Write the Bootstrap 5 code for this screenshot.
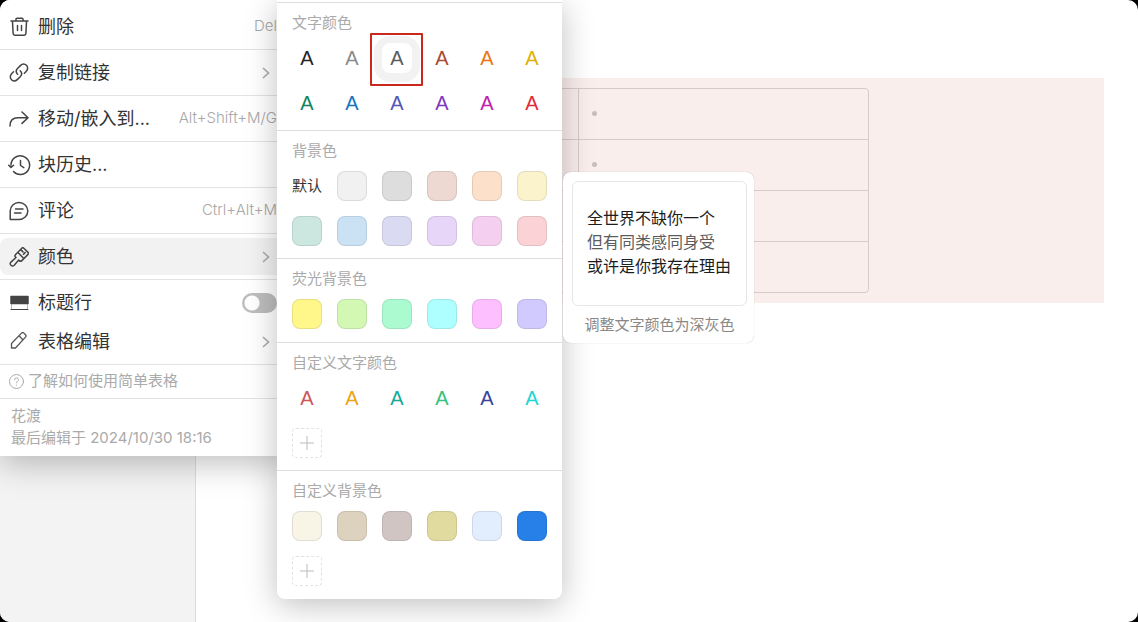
<!DOCTYPE html>
<html lang="zh-CN">
<head>
<meta charset="utf-8">
<meta name="viewport" content="width=device-width, initial-scale=1">
<title>简单表格</title>
<link rel="stylesheet" href="https://cdn.jsdelivr.net/npm/bootstrap@5.3.0/dist/css/bootstrap.min.css">
<style>
  body { background: #000; font-family: Inter, "Noto Sans CJK SC", sans-serif; color: #333; }
  .shell { background: #fff; border-radius: 10px; }
  .sidebar { flex: 0 0 196px; background: #f3f3f3; border-right: 1px solid #dcdcdc; }
  .page { padding: 78px 34px 0 81px; }
  .block { background: #faeeed; padding: 10px; }
  .grid-frame { max-width: 582px; border: 1px solid #d8cac9; border-radius: 4px; }
  .grid-frame table { width: 100%; table-layout: fixed; border-collapse: separate; border-spacing: 0; }
  .grid-frame td { height: 51px; padding: 0 13px 2px; border-bottom: 1px solid #d8cac9; }
  .grid-frame td + td { border-left: 1px solid #d8cac9; }
  .grid-frame tr:last-child td { height: 50px; border-bottom: 0; }
  .bullet { width: 5px; height: 5px; background: #cbbdbd; }

  .menu { top: 0; left: 0; width: 288px; padding-top: 3px; background: #fff; box-shadow: 0 8px 30px rgba(0,0,0,.25); }
  .group { border-top: 1px solid #e3e3e3; padding: 4px 0; }
  .group:first-child { border-top-color: transparent; }
  .pair { gap: 2px; }
  .item { height: 37px; padding: 0 11px 0 9px; gap: 9px; border: 0; border-radius: 8px; background: none; font-size: 18px; color: #333; text-align: left; }
  .item.chosen { background: #f2f2f2; }
  .item svg.glyph { width: 20px; height: 20px; flex: none; }
  .glyph { fill: none; stroke: #444; stroke-width: 1.5; stroke-linecap: round; stroke-linejoin: round; }
  .keys { font-size: 15px; font-weight: 300; color: #a8a8a8; }
  .chev { width: 8px; height: 14px; margin-right: 7px; fill: none; stroke: #aaa; stroke-width: 1.6; }
  .switch.form-check-input { width: 35px; height: 20px; margin: 0; border: 0; border-radius: 10px; background: radial-gradient(circle at 10px 10px, #fff 7px, #bdbdbd 8px); }
  .help { height: 33px; padding-left: 9px; gap: 4px; font-size: 15px; color: #aaa; }
  .meta { padding: 6px 11px 7px; font-size: 15px; line-height: 22px; color: #aaa; }

  .panel { top: 0; left: 277px; width: 285px; padding: 2px 0 1px; background: #fff; border-radius: 0 0 8px 8px; box-shadow: 0 6px 32px rgba(0,0,0,.25); }
  .sect { border-top: 1px solid #ddd; padding: 10px 15px 12px; }
  .sect-short { padding-bottom: 13px; }
  .sect h2 { font-size: 15px; line-height: 20px; font-weight: 400; color: #aaa; margin: 0 0 10px; }
  .swatches { display: grid; grid-template-columns: repeat(6, 30px); gap: 15px; }
  .sw { width: 30px; height: 30px; padding: 0; border: 1px solid rgba(0,0,0,.09); border-radius: 8px; }
  .ltr { border: 0; background: #fff; font-family: "Liberation Sans", sans-serif; font-size: 20px; line-height: 30px; }
  .plain { border: 0; background: none; font-size: 15px; line-height: 28px; color: #333; white-space: nowrap; }
  .add { border: 1px dashed #e2e2e2; border-radius: 4px; background: #fff; display: grid; place-items: center; }
  .picked { box-shadow: 0 1px 0 8px #f2f2f2; }
  .frame { left: -12px; top: -10px; width: 53px; height: 53px; border: 2px solid #c9281c; border-radius: 1px; }

  .tip { top: 172px; left: 563px; width: 191px; padding: 9px 7px 8px 9px; background: #fff; border-radius: 8px; box-shadow: 0 0 1px rgba(0,0,0,.3); }
  .sample { padding: 24px 0 27px 14px; border: 1px solid #e6e6e6; border-radius: 6px; font-size: 16px; line-height: 24px; color: #1d1d1d; white-space: nowrap; }
  .tip-note { margin-top: 9px; font-size: 15px; line-height: 20px; color: #888; white-space: nowrap; }
</style>
</head>
<body>
<div class="shell position-relative d-flex min-vh-100 overflow-hidden">
  <aside class="sidebar"></aside>
  <main class="page flex-grow-1">
    <div class="block">
      <div class="grid-frame">
        <table>
          <tr><td></td><td><span class="bullet rounded-circle d-block"></span></td></tr>
          <tr><td></td><td><span class="bullet rounded-circle d-block"></span></td></tr>
          <tr><td></td><td></td></tr>
          <tr><td></td><td></td></tr>
        </table>
      </div>
    </div>
  </main>

  <nav class="menu position-absolute">
    <div class="group">
      <button class="item d-flex align-items-center w-100"><svg class="glyph" viewBox="0 0 20 20"><path d="M2 4h17M7 3.700V2.100Q7 1.200 8 1.200h5q1 0 1 .9v1.600M3.500 4.300l.6 12.200q.1 1.700 1.800 1.700h9.200q1.700 0 1.800-1.700l.6-12.200M8.500 8.500v5M12.500 8.500v5"/></svg><span>删除</span><span class="keys ms-auto">Del</span></button>
    </div>
    <div class="group">
      <button class="item d-flex align-items-center w-100"><svg class="glyph" viewBox="0 0 20 20"><path d="M8.600 11.300C6.900 9.500 7 7 8.700 5.300l2.700-2.700c1.800-1.800 4.300-1.900 6-.3 1.700 1.700 1.600 4.300-.1 6l-1.900 1.900M11.200 7.700c1.800 1.800 1.700 4.300 0 6l-2.700 2.700c-1.800 1.800-4.300 1.900-6 .3-1.700-1.700-1.600-4.300.1-6l1.900-1.900"/></svg><span>复制链接</span><svg class="chev ms-auto" viewBox="0 0 8 14"><path d="M1 2l5.500 5L1 12"/></svg></button>
    </div>
    <div class="group">
      <button class="item d-flex align-items-center w-100"><svg class="glyph" viewBox="0 0 20 20"><path d="M1 17C1 11 4 8.700 9 8.700h9.500M13 3l6 5.700-6 5.700"/></svg><span>移动/嵌入到...</span><span class="keys ms-auto">Alt+Shift+M/G</span></button>
    </div>
    <div class="group">
      <button class="item d-flex align-items-center w-100"><svg class="glyph overflow-visible" viewBox="0 0 20 20"><path d="M2 10A9.300 9.300 0 1 1 4.500 16.500M-.3 10.200l2.300 2.200 2.600-2.200M11.500 5.500v5l3.300 2.200"/></svg><span>块历史...</span></button>
    </div>
    <div class="group">
      <button class="item d-flex align-items-center w-100"><svg class="glyph" viewBox="0 0 20 20"><path d="M1.200 18.500V10a8.800 8.500 0 1 1 8.800 8.500zM6.500 8h7.500M5.500 12h6.500"/></svg><span>评论</span><span class="keys ms-auto">Ctrl+Alt+M</span></button>
    </div>
    <div class="group">
      <button class="item chosen d-flex align-items-center w-100"><svg class="glyph" viewBox="0 0 20 20"><path d="M12.800 1.200Q13.800.2 14.800 1.200l4.200 4.200q1 1 0 2l-6.200 6.200q-1.300 1.300-2.600 0l-.5-.5-4.500 5.200q-1.600 1.500-3.200 0t0-3.200l5-4.600-.4-.4q-1.300-1.300 0-2.600zM8.800 5.300l6 6.200M11.700 2.600l2.300 2.300M14.500 7.200l1.600-1.600"/></svg><span>颜色</span><svg class="chev ms-auto" viewBox="0 0 8 14"><path d="M1 2l5.500 5L1 12"/></svg></button>
    </div>
    <div class="group pair d-flex flex-column">
      <div class="item d-flex align-items-center w-100"><svg class="glyph" viewBox="0 0 20 20"><path d="M2.500 11v5.500M18.500 11v5.500" stroke="#bbb" stroke-width="1"/><path d="M2 3.500h17v7H2z" fill="#444"/><path d="M2 16.500h17" stroke-width="1"/></svg><label for="headrow">标题行</label><input id="headrow" type="checkbox" role="switch" class="form-check-input switch ms-auto"></div>
      <button class="item d-flex align-items-center w-100"><svg class="glyph" viewBox="0 0 20 20"><path d="M2.500 16v-4.500L12.500 1.100q1.200-1.200 2.400 0l1.600 1.600q1.200 1.200 0 2.400L6.500 16zM10 3.800l3.800 3.900" stroke="#555" stroke-width="1.300"/></svg><span>表格编辑</span><svg class="chev ms-auto" viewBox="0 0 8 14"><path d="M1 2l5.500 5L1 12"/></svg></button>
    </div>
    <div class="group py-0">
      <a href="#" class="help d-flex align-items-center text-decoration-none"><svg width="15" height="15" viewBox="0 0 15 15" fill="none" stroke="#aaa" stroke-linecap="round"><circle cx="7.500" cy="7.500" r="7"/><path d="M5.500 5.800q.1-1.900 2-1.900t2 1.700c0 1.400-2 1.600-2 3.200M7.500 11v.2"/></svg><span>了解如何使用简单表格</span></a>
    </div>
    <div class="group meta">
      <div>花渡</div>
      <div>最后编辑于 2024/10/30 18:16</div>
    </div>
  </nav>

  <section class="panel position-absolute">
    <div class="sect"><h2>文字颜色</h2>
      <div class="swatches">
        <button class="sw ltr" style="color:#262626">A</button>
        <button class="sw ltr" style="color:#8c8c8c">A</button>
        <button class="sw ltr picked position-relative" style="color:#5c5c5c">A<span class="frame position-absolute"></span></button>
        <button class="sw ltr" style="color:#a84b35">A</button>
        <button class="sw ltr" style="color:#ed7412">A</button>
        <button class="sw ltr" style="color:#dfb007">A</button>
        <button class="sw ltr" style="color:#13855f">A</button>
        <button class="sw ltr" style="color:#1677bd">A</button>
        <button class="sw ltr" style="color:#5356b8">A</button>
        <button class="sw ltr" style="color:#8038c4">A</button>
        <button class="sw ltr" style="color:#c120ad">A</button>
        <button class="sw ltr" style="color:#e02b38">A</button>
      </div>
    </div>
    <div class="sect"><h2>背景色</h2>
      <div class="swatches">
        <button class="sw plain">默认</button>
        <button class="sw" style="background:#f1f1f1" aria-label="浅灰"></button>
        <button class="sw" style="background:#dddddd" aria-label="灰"></button>
        <button class="sw" style="background:#edd8d2" aria-label="棕"></button>
        <button class="sw" style="background:#fce0ca" aria-label="橙"></button>
        <button class="sw" style="background:#fbf3cb" aria-label="黄"></button>
        <button class="sw" style="background:#cce7df" aria-label="绿"></button>
        <button class="sw" style="background:#cbe2f5" aria-label="蓝"></button>
        <button class="sw" style="background:#dadaf3" aria-label="靛"></button>
        <button class="sw" style="background:#e7d6f7" aria-label="紫"></button>
        <button class="sw" style="background:#f4cff0" aria-label="粉"></button>
        <button class="sw" style="background:#fbd2d5" aria-label="红"></button>
      </div>
    </div>
    <div class="sect sect-short"><h2>荧光背景色</h2>
      <div class="swatches">
        <button class="sw" style="background:#fff78a" aria-label="荧光黄"></button>
        <button class="sw" style="background:#d2f8b4" aria-label="荧光草绿"></button>
        <button class="sw" style="background:#acfbd0" aria-label="荧光绿"></button>
        <button class="sw" style="background:#aeffff" aria-label="荧光青"></button>
        <button class="sw" style="background:#fdbfff" aria-label="荧光粉"></button>
        <button class="sw" style="background:#d1caff" aria-label="荧光紫"></button>
      </div>
    </div>
    <div class="sect"><h2>自定义文字颜色</h2>
      <div class="swatches">
        <button class="sw ltr" style="color:#cb5659">A</button>
        <button class="sw ltr" style="color:#eaa416">A</button>
        <button class="sw ltr" style="color:#18a999">A</button>
        <button class="sw ltr" style="color:#36c27c">A</button>
        <button class="sw ltr" style="color:#37429a">A</button>
        <button class="sw ltr" style="color:#20d6d2">A</button>
        <button class="sw add" aria-label="添加文字颜色"><svg width="14" height="14" stroke="#bbb" stroke-width="1"><path d="M7 0v14M0 7h14"/></svg></button>
      </div>
    </div>
    <div class="sect"><h2>自定义背景色</h2>
      <div class="swatches">
        <button class="sw" style="background:#f8f4e6" aria-label="米白"></button>
        <button class="sw" style="background:#ddd2be" aria-label="米色"></button>
        <button class="sw" style="background:#d0c5c2" aria-label="灰棕"></button>
        <button class="sw" style="background:#e1dba0" aria-label="橄榄"></button>
        <button class="sw" style="background:#e2edfe" aria-label="淡蓝"></button>
        <button class="sw" style="background:#2780e8" aria-label="亮蓝"></button>
        <button class="sw add" aria-label="添加背景色"><svg width="14" height="14" stroke="#bbb" stroke-width="1"><path d="M7 0v14M0 7h14"/></svg></button>
      </div>
    </div>
  </section>

  <div class="tip position-absolute" role="tooltip">
    <div class="sample">
      <div>全世界不缺你一个</div>
      <div style="color:#5c5c5c">但有同类感同身受</div>
      <div>或许是你我存在理由</div>
    </div>
    <div class="tip-note text-center">调整文字颜色为深灰色</div>
  </div>
</div>
<script src="https://cdn.jsdelivr.net/npm/bootstrap@5.3.0/dist/js/bootstrap.bundle.min.js"></script>
</body>
</html>
